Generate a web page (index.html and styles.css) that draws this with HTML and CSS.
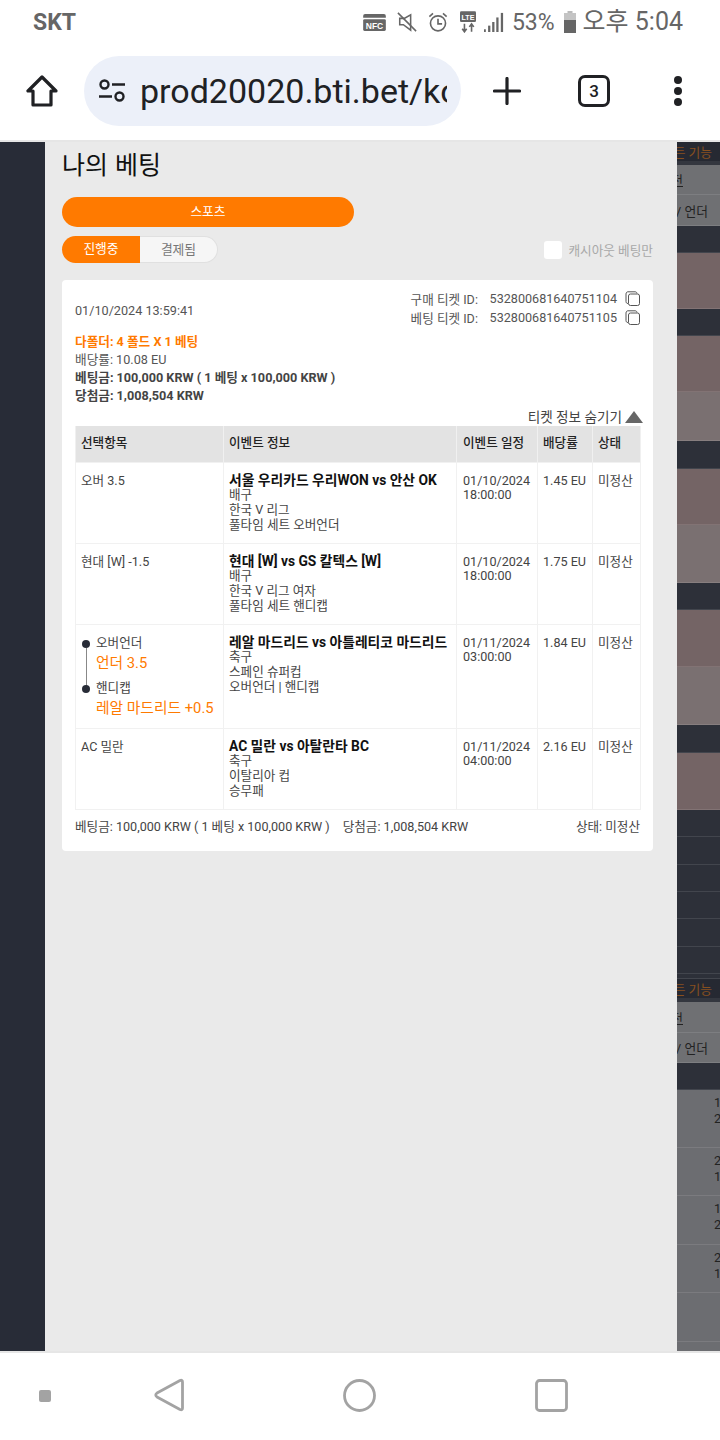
FILE: index.html
```html
<!DOCTYPE html>
<html lang="ko">
<head>
<meta charset="utf-8">
<title>나의 베팅</title>
<link rel="stylesheet" href="styles.css">
</head>
<body>
<div class="phone">
  <header class="status">
    <span class="carrier">SKT</span>
    <div class="status-right">
      <svg class="si nfc" viewBox="0 0 24 18"><path d="M2 0h20a2 2 0 0 1 2 2v2H0V2a2 2 0 0 1 2-2z" fill="#666"/><rect y="5.500" width="24" height="12.500" rx="1.500" fill="#666"/><text x="12" y="15.500" text-anchor="middle" class="nfc-t">NFC</text></svg>
      <svg class="si mute" viewBox="0 0 22 22" fill="none" stroke="#666" stroke-width="1.700"><path d="M3 7v7h4l8 6V3L8 7z"/><path d="M1 1l20 20"/></svg>
      <svg class="si alarm" viewBox="0 0 22 24" fill="none" stroke="#666" stroke-width="1.800"><circle cx="11" cy="13.500" r="8.300"/><path d="M11 8.500v5.500h4.500M1.500 6l4-3.500M20.500 6l-4-3.500"/></svg>
      <svg class="si lte" viewBox="0 0 18 24"><rect width="18" height="12" rx="1.500" fill="#666"/><text x="9" y="10" text-anchor="middle" class="lte-t">LTE</text><path d="M5 14v8M2.500 19.500L5 23l2.500-3.500M13 23v-8M10.500 17.500L13 14l2.500 3.500" fill="none" stroke="#666" stroke-width="1.800"/></svg>
      <svg class="si bars" viewBox="0 0 22 22" fill="#666"><rect x="0" y="19" width="2" height="3"/><rect x="4.500" y="15" width="2.500" height="7"/><rect x="9" y="11" width="2.500" height="11"/><rect x="13.500" y="6" width="2.500" height="16"/><rect x="18.500" y="1" width="2.500" height="21"/></svg>
      <span class="pct">53%</span>
      <svg class="si batt" viewBox="0 0 12 22"><rect x="3.500" y="0" width="5" height="3" fill="#bbb"/><rect x="0" y="2" width="12" height="8" fill="#c4c4c4"/><rect x="0" y="9" width="12" height="13" fill="#666"/></svg>
      <span class="time">오후 5:04</span>
    </div>
  </header>

  <nav class="toolbar">
    <svg class="home" viewBox="0 0 32 32" fill="none" stroke="#202124" stroke-width="3.200" stroke-linejoin="round"><path d="M16 2L2 16h5v14h18V16h5z"/></svg>
    <div class="urlbar">
      <svg class="tune" viewBox="0 0 26 24" fill="none" stroke="#202124" stroke-width="2.400"><circle cx="5.500" cy="5.500" r="4"/><path d="M13 5.500h13M0 17.500h13"/><circle cx="20.500" cy="17.500" r="4"/></svg>
      <span class="url">prod20020.bti.bet/ko</span>
    </div>
    <svg class="plus" viewBox="0 0 28 28" stroke="#202124" stroke-width="3.200" stroke-linecap="round"><path d="M14 1.500v25M1.500 14h25"/></svg>
    <div class="tabs"><span>3</span></div>
    <div class="dots"><i></i><i></i><i></i></div>
  </nav>

  <div class="viewport">
    <aside class="side"></aside>
    <main class="main">
      <h1 class="title">나의 베팅</h1>
      <button class="sports">스포츠</button>
      <div class="filters">
        <div class="seg">
          <span class="seg-on">진행중</span>
          <span class="seg-off">결제됨</span>
        </div>
        <label class="cash"><span class="box"></span>캐시아웃 베팅만</label>
      </div>

      <section class="card">
        <div class="card-top">
          <span class="date">01/10/2024 13:59:41</span>
          <div class="ids">
            <div class="id-row"><span class="id-l">구매 티켓 ID:</span><span class="id-n">532800681640751104</span><svg class="copy" viewBox="0 0 15 15" fill="none" stroke="#555" stroke-width="1"><path d="M3 12.500C1.500 12.500 1 11.500 1 10.500V3C1 1.500 2 .8 3 .8h7c1.200 0 2 .7 2 1.700"/><rect x="3.500" y="3" width="11" height="11.500" rx="2" fill="#fff"/></svg></div>
            <div class="id-row"><span class="id-l">베팅 티켓 ID:</span><span class="id-n">532800681640751105</span><svg class="copy" viewBox="0 0 15 15" fill="none" stroke="#555" stroke-width="1"><path d="M3 12.500C1.500 12.500 1 11.500 1 10.500V3C1 1.500 2 .8 3 .8h7c1.200 0 2 .7 2 1.700"/><rect x="3.500" y="3" width="11" height="11.500" rx="2" fill="#fff"/></svg></div>
          </div>
        </div>
        <div class="summary">
          <div class="s-or">다폴더: 4 폴드 X 1 베팅</div>
          <div class="s-reg">배당률: 10.08 EU</div>
          <div class="s-b">베팅금: 100,000 KRW ( 1 베팅 x 100,000 KRW )</div>
          <div class="s-b">당첨금: 1,008,504 KRW</div>
        </div>
        <div class="toggle"><span>티켓 정보 숨기기</span><i class="tri"></i></div>
        <table class="tbl">
          <thead>
            <tr><th class="c1">선택항목</th><th class="c2">이벤트 정보</th><th class="c3">이벤트 일정</th><th class="c4">배당률</th><th class="c5">상태</th></tr>
          </thead>
          <tbody>
            <tr class="r1">
              <td>오버 3.5</td>
              <td class="ev"><b>서울 우리카드 우리WON vs 안산 OK</b><br>배구<br>한국 V 리그<br>풀타임 세트 오버언더</td>
              <td class="when">01/10/2024<br>18:00:00</td><td>1.45 EU</td><td class="st">미정산</td>
            </tr>
            <tr class="r2">
              <td>현대 [W] -1.5</td>
              <td class="ev"><b>현대 [W] vs GS 칼텍스 [W]</b><br>배구<br>한국 V 리그 여자<br>풀타임 세트 핸디캡</td>
              <td class="when">01/10/2024<br>18:00:00</td><td>1.75 EU</td><td class="st">미정산</td>
            </tr>
            <tr class="r3">
              <td class="legs">
                <div class="leg first"><span>오버언더</span><em>언더 3.5</em></div>
                <div class="leg second"><span>핸디캡</span><em>레알 마드리드 +0.5</em></div>
              </td>
              <td class="ev"><b>레알 마드리드 vs 아틀레티코 마드리드</b><br>축구<br>스페인 슈퍼컵<br>오버언더 | 핸디캡</td>
              <td class="when">01/11/2024<br>03:00:00</td><td>1.84 EU</td><td class="st">미정산</td>
            </tr>
            <tr class="r4">
              <td>AC 밀란</td>
              <td class="ev"><b>AC 밀란 vs 아탈란타 BC</b><br>축구<br>이탈리아 컵<br>승무패</td>
              <td class="when">01/11/2024<br>04:00:00</td><td>2.16 EU</td><td class="st">미정산</td>
            </tr>
          </tbody>
        </table>
        <div class="foot">
          <span class="f-a">베팅금: 100,000 KRW ( 1 베팅 x 100,000 KRW )</span>
          <span class="f-b">당첨금: 1,008,504 KRW</span>
          <span class="f-c">상태: 미정산</span>
        </div>
      </section>
    </main>
    <aside class="strip">
      <div class="b h23 dk0 t-or">모든 기능</div>
      <div class="b h30 gr t-u">전</div>
      <div class="b h31 gr t-o">오버 / 언더</div>
      <div class="b h27 dk"></div>
      <div class="b h56 br"></div>
      <div class="b h27 dk"></div>
      <div class="b h56 br"></div>
      <div class="b h49 lb"></div>
      <div class="b h28 dk"></div>
      <div class="b h56 br"></div>
      <div class="b h58 lb"></div>
      <div class="b h27 dk"></div>
      <div class="b h57 br"></div>
      <div class="b h58 lb"></div>
      <div class="b h28 dk"></div>
      <div class="b h57 br"></div>
      <div class="b h27 dk ln"></div>
      <div class="b h28 dk ln"></div>
      <div class="b h27 dk ln"></div>
      <div class="b h27 dk ln"></div>
      <div class="b h28 dk ln"></div>
      <div class="b h27 dk ln"></div>
      <div class="b h5 dk ln"></div>
      <div class="b h23 dk0 t-or">모든 기능</div>
      <div class="b h31 gr t-u">전</div>
      <div class="b h30 gr t-o">오버 / 언더</div>
      <div class="b h27 dk"></div>
      <div class="b h58 gr2 t-n">1<br>2</div>
      <div class="b h48 gr2 t-n">2<br>1</div>
      <div class="b h49 gr2 t-n">1<br>2</div>
      <div class="b h48 gr2 t-n">2<br>1</div>
      <div class="b h49 gr2"></div>
      <div class="b h10 gr2"></div>
    </aside>
  </div>

  <footer class="navbar">
    <svg class="nv n-dot" viewBox="0 0 12 12"><rect width="12" height="12" rx="2" fill="#a3a3a3"/></svg>
    <svg class="nv n-back" viewBox="0 0 30 34" fill="none" stroke="#a3a3a3" stroke-width="2.800" stroke-linejoin="round"><path d="M26 2.500Q28.500 1.500 28.500 4V30Q28.500 32.500 26 31.500L3 19Q.5 17 3 15z"/></svg>
    <svg class="nv n-home" viewBox="0 0 33 33" fill="none" stroke="#a3a3a3" stroke-width="2.800"><circle cx="16.500" cy="16.500" r="15"/></svg>
    <svg class="nv n-rec" viewBox="0 0 33 33" fill="none" stroke="#a3a3a3" stroke-width="2.800"><rect x="1.500" y="1.500" width="30" height="30" rx="3"/></svg>
  </footer>
</div>
</body>
</html>
```
FILE: styles.css
```css
* { box-sizing: border-box; }
html, body { margin: 0; padding: 0; }
body { width: 720px; height: 1440px; overflow: hidden; background: #fff; font-family: Roboto, "Noto Sans CJK KR", sans-serif; }
.phone { width: 720px; height: 1440px; display: flex; flex-direction: column; overflow: hidden; }

/* status bar */
.status { height: 44px; flex: none; display: flex; align-items: center; justify-content: space-between; padding: 0 37px 0 33px; color: #666; }
.carrier { font-size: 23px; font-weight: 700; }
.status-right { display: flex; align-items: center; }
.si { display: block; flex: none; }
.nfc { width: 23px; height: 17px; margin-right: 11px; }
.nfc-t { font: 700 9px "Liberation Sans", sans-serif; fill: #fff; }
.mute { width: 20px; height: 20px; margin-right: 11px; }
.alarm { width: 20px; height: 22px; margin-right: 12px; }
.lte { width: 16px; height: 22px; margin-right: 8px; }
.lte-t { font: 700 8px "Liberation Sans", sans-serif; fill: #fff; }
.bars { width: 20px; height: 20px; margin-right: 8px; }
.pct { font-size: 23px; margin-right: 8px; }
.batt { width: 14px; height: 22px; margin-right: 6px; }
.time { font-size: 25px; line-height: 30px; }

/* toolbar */
.toolbar { height: 96px; flex: none; display: flex; align-items: center; padding: 0 38px 2px 26px; }
.home { width: 32px; height: 32px; margin-right: 26px; flex: none; }
.urlbar { width: 377px; height: 70px; border-radius: 35px; background: #ecf0f9; display: flex; align-items: center; padding: 0 14px 0 15px; flex: none; margin-right: 32px; }
.tune { width: 26px; height: 24px; flex: none; margin-right: 15px; }
.url { font-size: 34px; color: #202124; white-space: nowrap; overflow: hidden; flex: 1; }
.plus { width: 28px; height: 28px; flex: none; margin-right: 57px; }
.tabs { width: 32px; height: 32px; border: 3px solid #202124; border-radius: 7px; flex: none; display: flex; align-items: center; justify-content: center; font-size: 17px; font-weight: 500; color: #202124; margin-right: 64px; }
.dots { display: flex; flex-direction: column; gap: 3px; flex: none; }
.dots i { width: 8px; height: 8px; background: #202124; border-radius: 50%; display: block; }

/* page */
.viewport { height: 1212px; flex: none; border-top: 2px solid #e6e6e6; display: flex; }
.side { width: 45px; flex: none; background: #282c37; }
.main { width: 632px; flex: none; background: #eaeaea; padding: 0 24px 0 17px; }
.title { margin: 7px 0 0; font-size: 25px; line-height: 28px; font-weight: 400; color: #111; font-family: "Noto Sans CJK KR", sans-serif; }
.sports { display: block; width: 292px; height: 30px; margin: 20px 0 0; border: 0; border-radius: 15px; background: #ff7a00; color: #fff; font: 12.750px/30px Roboto, "Noto Sans CJK KR", sans-serif; padding: 0; }
.filters { display: flex; justify-content: space-between; align-items: center; margin-top: 9px; height: 27px; }
.seg { display: flex; height: 27px; font-size: 12.750px; line-height: 25px; text-align: center; }
.seg-on { width: 78px; background: #ff7a00; color: #fff; border-radius: 14px 0 0 14px; }
.seg-off { width: 78px; background: #f6f6f6; color: #777; border: 1px solid #e0e0e0; border-left: 0; border-radius: 0 14px 14px 0; }
.cash { display: flex; align-items: center; font-size: 12.650px; color: #a8a8a8; }
.box { width: 18px; height: 18px; background: #fff; border-radius: 3px; margin-right: 6px; }

/* card */
.card { margin-top: 17px; background: #fff; border-radius: 4px; padding: 9px 13px 0; height: 571px; }
.card-top { display: flex; justify-content: space-between; color: #555; font-size: 12.600px; height: 38px; }
.date { margin-top: 14px; line-height: 16px; font-size: 12.650px; }
.id-row { display: flex; align-items: center; height: 19px; }
.id-l { width: 79px; white-space: nowrap; }
.id-n { margin-right: 8px; }
.copy { width: 15px; height: 15px; flex: none; }
.summary { margin-top: 6px; font-size: 12.650px; line-height: 18px; color: #555; }
.s-or { color: #ff7a00; font-weight: 700; }
.s-b { color: #444; font-weight: 700; }
.toggle { display: flex; justify-content: flex-end; align-items: center; margin: 0 -3px 0 0; height: 21px; font-size: 13.600px; color: #444; }
.tri { width: 0; height: 0; margin: 3px 0 0 3px; border-left: 9.500px solid transparent; border-right: 9.500px solid transparent; border-bottom: 12px solid #666; }

.tbl { width: 565px; border-collapse: collapse; table-layout: fixed; font-size: 12.600px; line-height: 14.600px; color: #444; }
.tbl th { height: 36px; padding: 0 5px; background: #e3e3e3; color: #222; text-align: left; font-weight: 500; border: 1px solid #f0f0f0; border-width: 0 1px; }
.tbl th.c3 { padding-left: 6px; }
.tbl td { vertical-align: top; padding: 11px 5px 0; border: 1px solid #f1f1f1; white-space: nowrap; }
.tbl td.ev { padding-top: 10px; line-height: 14.700px; }
.tbl td.when { padding-left: 6px; }
.tbl td b { font-size: 13.800px; color: #111; font-weight: 700; }
.c1 { width: 148px; }
.c2 { width: 233px; }
.c3 { width: 81px; }
.c4 { width: 55px; }
.c5 { width: 48px; }
.r1, .r2, .r4 { height: 81px; }
.r3 { height: 104px; }
.tbl td.legs { padding: 8px 0 0 20px; }
.leg { position: relative; }
.leg.second { margin-top: 4px; }
.leg span { display: block; line-height: 20px; }
.leg em { display: block; margin-top: -1px; font-style: normal; font-size: 14.750px; line-height: 22px; color: #ff7a00; }
.leg::before { content: ""; position: absolute; left: -14px; top: 7px; width: 8px; height: 8px; border-radius: 50%; background: #282c37; }
.leg.first::after { content: ""; position: absolute; left: -10px; top: 15px; width: 1px; height: 38px; background: #888; }

.foot { display: flex; margin-top: 9px; font-size: 12.600px; line-height: 16px; color: #444; }
.f-a { margin-right: 13px; }
.f-c { margin-left: auto; }

/* dimmed page behind */
.strip { width: 43px; flex: none; background: #2d3039; font-size: 12.750px; overflow: hidden; }
.b { display: flex; flex: none; align-items: center; white-space: nowrap; overflow: hidden; border-bottom: 1px solid rgba(255,255,255,.1); }
.h5 { height: 5px; } .h10 { height: 10px; } .h23 { height: 23px; } .h27 { height: 27px; } .h28 { height: 28px; } .h30 { height: 30px; } .h31 { height: 31px; }
.h48 { height: 48px; } .h49 { height: 49px; } .h56 { height: 56px; } .h57 { height: 57px; } .h58 { height: 58px; }
.dk { background: #2d3039; }
.dk0 { background: #262932; border-bottom: 4px solid #34373f; }
.gr { background: #6f7073; color: #222; }
.gr2 { background: #6c6d71; color: #222; }
.br { background: #746465; }
.lb { background: #7a7071; }
.t-or { color: #87501f; justify-content: flex-end; padding-right: 8px; }
.t-u { justify-content: flex-end; padding-right: 37px; text-decoration: underline; }
.t-o { justify-content: flex-end; padding-right: 12px; }
.t-n { display: block; padding: 5px 0 0 37px; line-height: 16px; }

/* nav bar */
.navbar { height: 88px; flex: none; border-top: 2px solid #e6e6e6; position: relative; margin-top: -1px; background: #fff; }
.nv { position: absolute; }
.n-dot { left: 39px; top: 37px; width: 12px; height: 12px; }
.n-back { left: 154px; top: 25px; width: 30px; height: 34px; }
.n-home { left: 343px; top: 26px; width: 33px; height: 33px; }
.n-rec { left: 535px; top: 26px; width: 33px; height: 33px; }
```
